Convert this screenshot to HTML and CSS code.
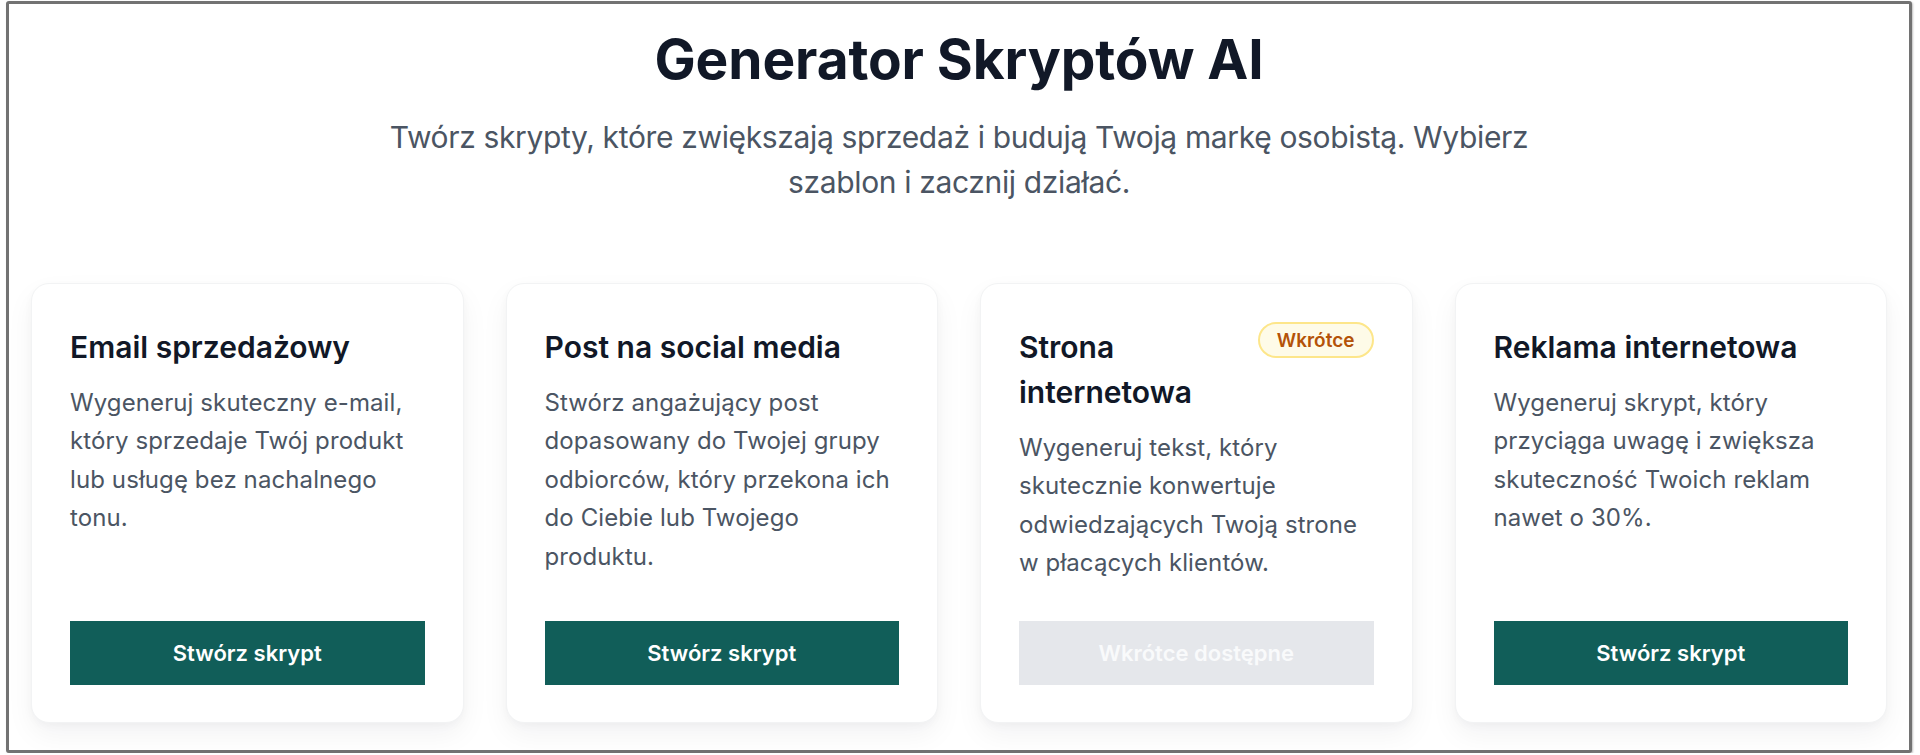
FILE: index.html
```html
<!DOCTYPE html>
<html lang="pl">
<head>
<meta charset="utf-8">
<title>Generator Skryptów AI</title>
<link rel="stylesheet" href="styles.css">
</head>
<body>
<div class="frame">
  <header class="hero">
    <h1 class="hero-title">Generator Skryptów AI</h1>
    <p class="hero-sub">Twórz skrypty, które zwiększają sprzedaż i budują Twoją markę osobistą. Wybierz szablon i zacznij działać.</p>
  </header>
  <main class="cards">
    <section class="card">
      <div class="card-head">
        <h2 class="card-title">Email sprzedażowy</h2>
      </div>
      <p class="card-desc">Wygeneruj skuteczny e-mail, który sprzedaje Twój produkt lub usługę bez nachalnego tonu.</p>
      <button class="btn">Stwórz skrypt</button>
    </section>
    <section class="card">
      <div class="card-head">
        <h2 class="card-title">Post na social media</h2>
      </div>
      <p class="card-desc">Stwórz angażujący post dopasowany do Twojej grupy odbiorców, który przekona ich do Ciebie lub Twojego produktu.</p>
      <button class="btn">Stwórz skrypt</button>
    </section>
    <section class="card">
      <div class="card-head">
        <h2 class="card-title">Strona internetowa</h2>
        <span class="badge">Wkrótce</span>
      </div>
      <p class="card-desc">Wygeneruj tekst, który skutecznie konwertuje odwiedzających Twoją strone w płacących klientów.</p>
      <button class="btn btn-disabled" disabled>Wkrótce dostępne</button>
    </section>
    <section class="card">
      <div class="card-head">
        <h2 class="card-title">Reklama internetowa</h2>
      </div>
      <p class="card-desc">Wygeneruj skrypt, który przyciąga uwagę i zwiększa skuteczność Twoich reklam nawet o 30%.</p>
      <button class="btn">Stwórz skrypt</button>
    </section>
  </main>
</div>
</body>
</html>
```
FILE: styles.css
```css
* { box-sizing: border-box; }
html, body { margin: 0; padding: 0; background: #ffffff; }
body {
  font-family: Inter, "Noto Sans", "Liberation Sans", sans-serif;
  color: #111827;
}
.frame {
  margin: 1px 0 0 6px;
  width: 1906px;
  height: 752px;
  border: 3px solid #727272;
  border-radius: 3px;
  background: #ffffff;
  box-shadow: 1px 1px 2px rgba(0,0,0,0.25);
  padding: 25px 22px 0 22px;
  display: flex;
  flex-direction: column;
}
.hero {
  display: flex;
  flex-direction: column;
  align-items: center;
  text-align: center;
}
.hero-title {
  margin: 0;
  font-size: 55px;
  line-height: 60px;
  font-weight: 700;
  color: #111827;
  letter-spacing: -0.1px;
}
.hero-sub {
  margin: 26px 0 0 0;
  max-width: 1152px;
  font-size: 30px;
  line-height: 45px;
  font-weight: 400;
  color: #4b5563;
  letter-spacing: -0.35px;
}
.cards {
  margin-top: 78px;
  display: grid;
  grid-template-columns: repeat(4, 1fr);
  gap: 42px;
}
.card {
  display: flex;
  flex-direction: column;
  background: #ffffff;
  border: 1px solid #f2f3f4;
  border-radius: 18px;
  padding: 41px 38px 37px 38px;
  box-shadow: 0 12px 28px rgba(17, 24, 39, 0.05), 0 3px 8px rgba(17, 24, 39, 0.03);
}
.card-head {
  display: flex;
  justify-content: space-between;
  align-items: flex-start;
  gap: 12px;
}
.card-title {
  margin: 0;
  font-size: 30px;
  line-height: 45px;
  font-weight: 600;
  color: #111827;
}
.badge {
  flex: none;
  margin-top: -3px;
  height: 36px;
  padding: 0 17px;
  display: inline-flex;
  align-items: center;
  border-radius: 999px;
  background: #fefbe8;
  border: 2px solid #fde68a;
  color: #b45309;
  font-size: 19px;
  font-weight: 600;
}
.card-desc {
  margin: 14px 0 0 0;
  flex: 1;
  font-size: 24px;
  line-height: 38.4px;
  color: #4b5563;
  letter-spacing: 0.1px;
}
.btn {
  margin-top: 38px;
  height: 64px;
  width: 100%;
  border: none;
  border-radius: 0;
  background: #115e59;
  color: #ffffff;
  font-family: inherit;
  font-size: 22px;
  font-weight: 600;
  cursor: pointer;
}
.btn-disabled {
  background: #e5e7eb;
  color: #f9fafb;
  cursor: not-allowed;
}
```
